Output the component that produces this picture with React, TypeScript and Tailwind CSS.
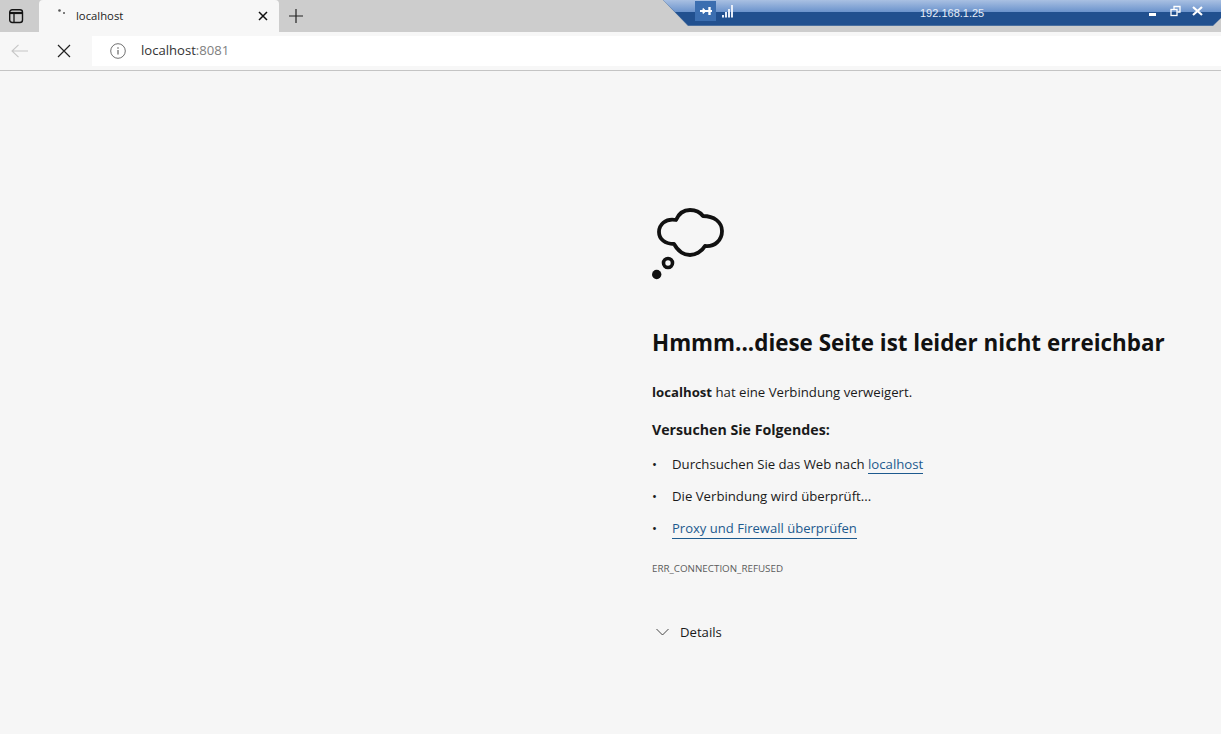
import React from "react";

const font = { fontFamily: '"Open Sans", "Noto Sans", sans-serif' };

function RemoteBar() {
  return (
    <div className="absolute top-0 left-[663px] w-[558px] h-[28px]">
      <div className="w-full h-[26px] [clip-path:polygon(0_0,100%_0,100%_18px,calc(100%-8px)_100%,25px_100%)] bg-[#4a6f9f]">
        <div className="w-full h-[25px] [clip-path:polygon(0_0,100%_0,100%_18px,calc(100%-8px)_100%,25px_100%)] flex flex-col">
          <div className="h-[12px] bg-gradient-to-b from-[#a9c0e2] to-[#6b93cc]" />
          <div className="h-[13px] bg-[#21508f]" />
        </div>
      </div>
      <div className="absolute left-[32px] top-[1px] w-[21px] h-[20px] bg-[#3b6eb0] flex items-center justify-center">
        <svg width="14" height="10" viewBox="0 0 14 10" fill="none" stroke="#fff">
          <path d="M1 5h12" strokeWidth="2" />
          <path d="M10.500 1v8" strokeWidth="2.400" />
          <path d="M4 2.500 7 5 4 7.500z" fill="#fff" strokeWidth="1" />
        </svg>
      </div>
      <svg className="absolute left-[58px] top-[4px]" width="14" height="14" viewBox="0 0 14 14" fill="#e8eef8">
        <rect x="1" y="11" width="2" height="2.500" />
        <rect x="4" y="8" width="2" height="5.500" />
        <rect x="7" y="5" width="2" height="8.500" />
        <rect x="10" y="1" width="2" height="12.500" />
      </svg>
      <div className="absolute left-[257px] top-[5px] text-[11px] leading-[16px] text-[#e6edf7]" style={{ fontFamily: '"Liberation Sans", sans-serif' }}>192.168.1.25</div>
      <div className="absolute left-[486px] top-[13px] w-[7px] h-[2.500px] bg-white" />
      <svg className="absolute left-[507px] top-[5px]" width="12" height="12" viewBox="0 0 12 12" fill="none" stroke="#fff" strokeWidth="1.300">
        <rect x="1" y="4.500" width="6" height="6" />
        <path d="M4 4V1.500h6v5.500H7.500" />
      </svg>
      <svg className="absolute left-[529px] top-[6px]" width="11" height="10" viewBox="0 0 11 10" stroke="#fff" strokeWidth="2.200">
        <path d="M1 1l9 8M10 1L1 9" />
      </svg>
    </div>
  );
}

function TabBar() {
  return (
    <div className="h-[32px] bg-[#cdcdcd] flex items-end">
      <div className="w-[39px] h-[32px] flex items-center pl-[8px]">
        <svg width="16" height="16" viewBox="0 0 16 16" fill="none" stroke="#141414" strokeWidth="1.400">
          <rect x="1.700" y="1.700" width="12.800" height="12.800" rx="2.500" />
          <path d="M1.700 5h12.800" strokeWidth="2.200" />
          <path d="M6 5v9.500" strokeWidth="1.300" />
        </svg>
      </div>
      <div className="w-[240px] h-[32px] bg-[#f7f7f7] rounded-t-[4px] flex items-center pl-[18px] pr-[11px]">
        <svg width="12" height="12" viewBox="0 0 12 12" fill="#555" className="mr-[6px] mb-[5px]">
          <circle cx="2.500" cy="2.500" r="1.300" />
          <circle cx="7" cy="5" r="1" />
        </svg>
        <span className="text-[11.300px] text-[#222] flex-1 ml-[1px]">localhost</span>
        <svg width="10" height="10" viewBox="0 0 10 10" stroke="#111" strokeWidth="1.500">
          <path d="M1 1l8 8M9 1l-8 8" />
        </svg>
      </div>
      <div className="w-[34px] h-[32px] flex items-center justify-center">
        <svg width="14" height="14" viewBox="0 0 14 14" stroke="#222" strokeWidth="1.200">
          <path d="M7 0v14M0 7h14" />
        </svg>
      </div>
    </div>
  );
}

function Toolbar() {
  return (
    <div className="h-[39px] bg-[#f7f7f7] border-b border-[#c4c4c4] flex items-center">
      <div className="w-[39px] flex justify-center">
        <svg width="18" height="14" viewBox="0 0 18 14" fill="none" stroke="#c6c6c6" strokeWidth="1.100">
          <path d="M1 7h16M7.500 .8 1 7l6.500 6.200" />
        </svg>
      </div>
      <div className="w-[53px] flex justify-center pr-[3px]">
        <svg width="14" height="14" viewBox="0 0 14 14" stroke="#222" strokeWidth="1.200">
          <path d="M1 1l12 12M13 1 1 13" />
        </svg>
      </div>
      <div className="flex-1 h-[30px] bg-white flex items-center pl-[18px]">
        <svg width="16" height="16" viewBox="0 0 16 16" fill="none" stroke="#707070" strokeWidth="1">
          <circle cx="8" cy="8" r="7.300" />
          <path d="M8 7v4.500" strokeWidth="1.300" />
          <path d="M8 4.300v1.400" strokeWidth="1.300" />
        </svg>
        <span className="ml-[15px] text-[13.100px]"><span className="text-[#333]">localhost</span><span className="text-[#808080]">:8081</span></span>
      </div>
    </div>
  );
}

function Cloud() {
  return (
    <svg width="76" height="76" viewBox="0 0 76 76" fill="none" stroke="#111" className="block">
      <path
        d="M24 15C27 8 32 5 38 5C44 5 48 7 51 11C62 11 70 17 70 26C70 35 63 42 53 41C50 46 44 50 38 50C31 50 26 46 22 39C13 39 7 34 7 27C7 20 13 13 24 15Z"
        strokeWidth="3.800"
        strokeLinejoin="round"
      />
      <circle cx="16" cy="58" r="4.500" strokeWidth="3.600" />
      <circle cx="4.700" cy="69.500" r="4.700" fill="#111" stroke="none" />
    </svg>
  );
}

export default function App() {
  return (
    <div className="relative w-[1221px] h-[734px] overflow-hidden bg-[#f6f6f6]" style={font}>
      <TabBar />
      <Toolbar />
      <RemoteBar />
      <main className="pl-[652px] pt-[134px] text-[#1a1a1a]">
        <Cloud />
        <h1 className="mt-[46px] text-[22.400px] leading-[32px] font-bold text-[#111]">Hmmm...diese Seite ist leider nicht erreichbar</h1>
        <p className="mt-[23px] text-[13.200px] leading-[20px]"><strong className="font-bold">localhost</strong> hat eine Verbindung verweigert.</p>
        <h2 className="mt-[18px] text-[14.200px] leading-[20px] font-bold">Versuchen Sie Folgendes:</h2>
        <ul className="mt-[14px] text-[13.200px] leading-[20px] flex flex-col gap-[12px]">
          <li className="flex">
            <span className="w-[20px]">•</span>
            <span>Durchsuchen Sie das Web nach <a className="text-[#1d5a8e] border-b border-[#1d5a8e]">localhost</a></span>
          </li>
          <li className="flex">
            <span className="w-[20px]">•</span>
            <span>Die Verbindung wird überprüft...</span>
          </li>
          <li className="flex">
            <span className="w-[20px]">•</span>
            <a className="text-[13.050px] text-[#1d5a8e] border-b border-[#1d5a8e]">Proxy und Firewall überprüfen</a>
          </li>
        </ul>
        <p className="mt-[23px] text-[9.800px] leading-[14px] text-[#5c5c5c]">ERR_CONNECTION_REFUSED</p>
        <div className="mt-[46px] flex items-center text-[13.150px] leading-[20px]">
          <svg className="ml-[4px] mr-[11px]" width="13" height="8" viewBox="0 0 13 8" fill="none" stroke="#333" strokeWidth="0.900">
            <path d="M.5 1l6 6 6-6" />
          </svg>
          <span>Details</span>
        </div>
      </main>
    </div>
  );
}
